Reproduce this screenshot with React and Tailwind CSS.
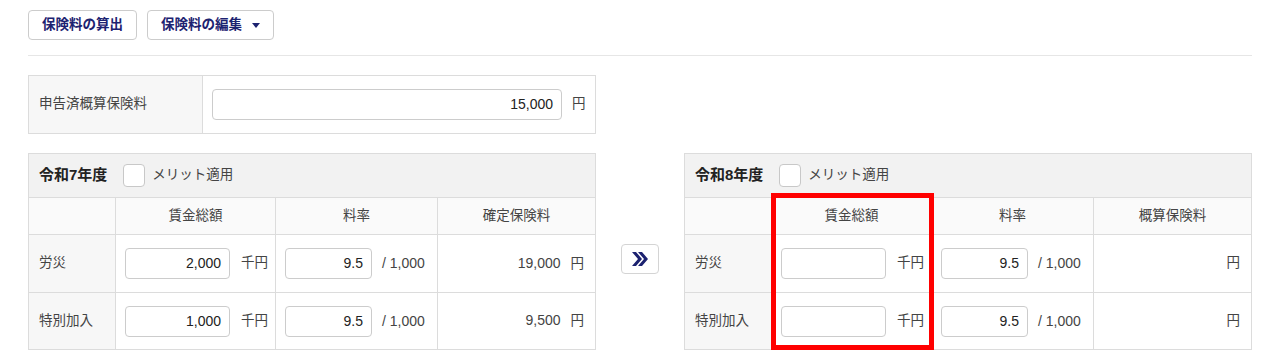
import React from "react";

const FONT = { fontFamily: '"Liberation Sans", "Noto Sans CJK JP", sans-serif' };

function NumInput({ value, w }) {
  return (
    <div
      className={`h-[31px] ${w} border border-[#cccccc] rounded-[4px] bg-white flex items-center justify-end pr-[8px] text-[14px] text-[#222]`}
    >
      {value}
    </div>
  );
}

function Checkbox() {
  return <div className="w-[22px] h-[23px] border border-[#c8c8c8] rounded-[4px] bg-white" />;
}

function YearTable({ year, lastHead, rows }) {
  return (
    <table className="border-collapse table-fixed w-[567px] text-[13.5px] text-[#333]">
      <colgroup>
        <col className="w-[87px]" />
        <col className="w-[160px]" />
        <col className="w-[162px]" />
        <col className="w-[158px]" />
      </colgroup>
      <tbody>
        <tr className="h-[44px]">
          <td colSpan={4} className="border border-[#dcdcdc] bg-[#f2f2f2] px-[10px]">
            <div className="flex items-center">
              <span className="font-bold text-[15px] text-[#222]">{year}</span>
              <span className="ml-[16px]"><Checkbox /></span>
              <span className="ml-[7px] text-[13.5px] text-[#444]">メリット適用</span>
            </div>
          </td>
        </tr>
        <tr className="h-[37px] bg-[#fafafa]">
          <td className="border border-[#dcdcdc]" />
          <td className="border border-[#dcdcdc] text-center text-[#444]">賃金総額</td>
          <td className="border border-[#dcdcdc] text-center text-[#444]">料率</td>
          <td className="border border-[#dcdcdc] text-center text-[#444]">{lastHead}</td>
        </tr>
        {rows.map((r, i) => (
          <tr key={r.label} className={i === 0 ? "h-[58px]" : "h-[57px]"}>
            <td className="border border-[#dcdcdc] bg-[#f7f7f7] pl-[10px] text-[#444]">{r.label}</td>
            <td className="border border-[#dcdcdc] bg-white pl-[9px]">
              <div className="flex items-center">
                <NumInput value={r.wage} w="w-[105px]" />
                <span className="ml-[11px] text-[#444]">千円</span>
              </div>
            </td>
            <td className="border border-[#dcdcdc] bg-white pl-[9px]">
              <div className="flex items-center">
                <NumInput value="9.5" w="w-[87px]" />
                <span className="ml-[10px] text-[14px] text-[#444]">/ 1,000</span>
              </div>
            </td>
            <td className="border border-[#dcdcdc] bg-white pr-[11px] text-right text-[#444]">
              {r.result ? <span className="mr-[10px] text-[14px]">{r.result}</span> : null}
              <span>円</span>
            </td>
          </tr>
        ))}
      </tbody>
    </table>
  );
}

export default function App() {
  return (
    <div className="w-[1280px] h-[356px] bg-white px-[28px] pt-[10px] overflow-hidden" style={FONT}>
      <div className="flex gap-[10px]">
        <button className="h-[30px] w-[109px] border border-[#cccccc] rounded-[4px] bg-white text-[13.5px] font-bold text-[#1c2270]">
          保険料の算出
        </button>
        <button className="h-[30px] w-[127px] border border-[#cccccc] rounded-[4px] bg-white text-[13.5px] font-bold text-[#1c2270] flex items-center justify-center gap-[10px]">
          <span>保険料の編集</span>
          <svg width="8" height="5" viewBox="0 0 8 5"><path d="M0 0h8L4 5z" fill="#1c2270" /></svg>
        </button>
      </div>
      <div className="mt-[15px] h-px bg-[#e6e6e6]" />

      <table className="mt-[19px] border-collapse table-fixed w-[567px] text-[13.5px] text-[#444]">
        <colgroup>
          <col className="w-[174px]" />
          <col className="w-[393px]" />
        </colgroup>
        <tbody>
          <tr className="h-[58px]">
            <td className="border border-[#dcdcdc] bg-[#f7f7f7] pl-[10px]">申告済概算保険料</td>
            <td className="border border-[#dcdcdc] bg-white pl-[9px]">
              <div className="flex items-center">
                <NumInput value="15,000" w="w-[350px]" />
                <span className="ml-[10px]">円</span>
              </div>
            </td>
          </tr>
        </tbody>
      </table>

      <div className="mt-[19px] flex">
        <YearTable
          year="令和7年度"
          lastHead="確定保険料"
          rows={[
            { label: "労災", wage: "2,000", result: "19,000" },
            { label: "特別加入", wage: "1,000", result: "9,500" },
          ]}
        />
        <div className="w-[90px] flex justify-center pt-[91px]">
          <div className="w-[38px] h-[30px] border border-[#d4d4d4] rounded-[4px] bg-white flex items-center justify-center">
            <svg width="18" height="16" viewBox="0 0 18 16">
              <path d="M1 1 L7 8 L1 15 H5 L11 8 L5 1 Z" fill="#1c2270" />
              <path d="M7 1 L13 8 L7 15 H11 L17 8 L11 1 Z" fill="#1c2270" />
            </svg>
          </div>
        </div>
        <div className="relative">
          <YearTable
            year="令和8年度"
            lastHead="概算保険料"
            rows={[
              { label: "労災", wage: "" },
              { label: "特別加入", wage: "" },
            ]}
          />
          <div className="absolute left-[87px] top-[40px] w-[163px] h-[157px] border-[5px] border-[#ff0000] pointer-events-none" />
        </div>
      </div>
    </div>
  );
}
